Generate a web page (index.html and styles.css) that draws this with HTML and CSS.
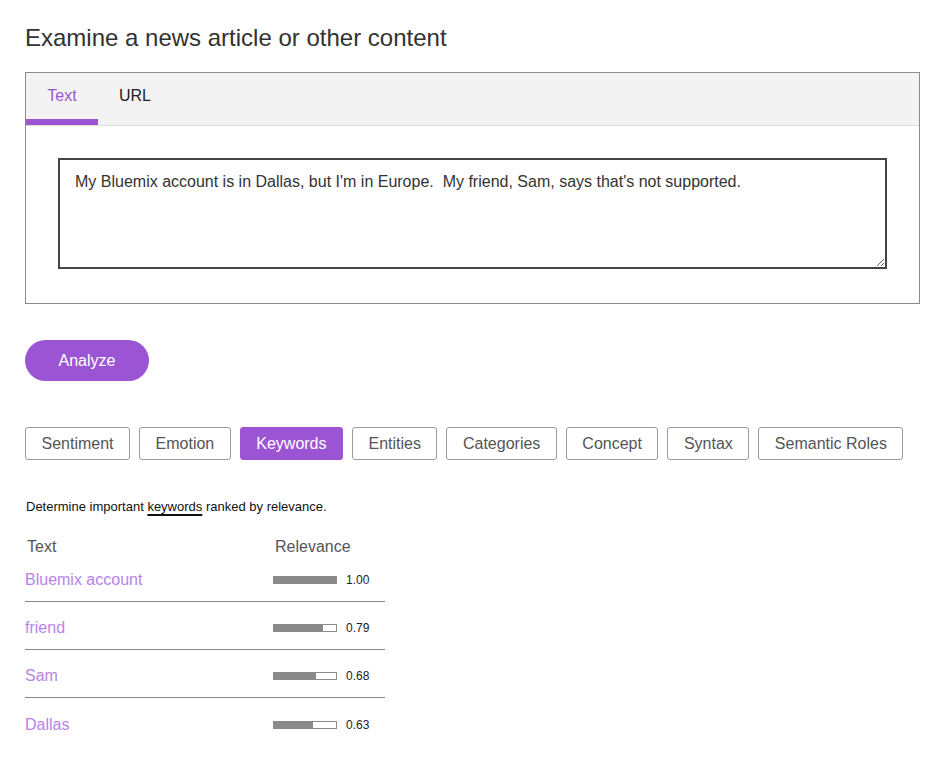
FILE: index.html
```html
<!DOCTYPE html>
<html>
<head>
<meta charset="utf-8">
<link rel="stylesheet" href="styles.css">
</head>
<body>
<main class="page">
  <h1 class="title">Examine a news article or other content</h1>
  <section class="panel">
    <div class="panel-tabs">
      <div class="panel-tab active">Text</div>
      <div class="panel-tab">URL</div>
    </div>
    <div class="panel-body">
      <textarea class="input" spellcheck="false">My Bluemix account is in Dallas, but I'm in Europe.  My friend, Sam, says that's not supported.</textarea>
    </div>
  </section>
  <button class="analyze">Analyze</button>
  <nav class="features">
    <button class="feature">Sentiment</button>
    <button class="feature">Emotion</button>
    <button class="feature selected">Keywords</button>
    <button class="feature">Entities</button>
    <button class="feature">Categories</button>
    <button class="feature">Concept</button>
    <button class="feature">Syntax</button>
    <button class="feature">Semantic Roles</button>
  </nav>
  <p class="desc">Determine important <span class="term">keywords</span> ranked by relevance.</p>
  <div class="results">
    <div class="row head">
      <div class="c-text">Text</div>
      <div class="c-rel">Relevance</div>
    </div>
    <div class="row item">
      <div class="c-text link">Bluemix account</div>
      <div class="c-rel"><span class="bar"><span class="fill" style="width:100%"></span></span><span class="val">1.00</span></div>
    </div>
    <div class="row item">
      <div class="c-text link">friend</div>
      <div class="c-rel"><span class="bar"><span class="fill" style="width:79%"></span></span><span class="val">0.79</span></div>
    </div>
    <div class="row item">
      <div class="c-text link">Sam</div>
      <div class="c-rel"><span class="bar"><span class="fill" style="width:68%"></span></span><span class="val">0.68</span></div>
    </div>
    <div class="row item last">
      <div class="c-text link">Dallas</div>
      <div class="c-rel"><span class="bar"><span class="fill" style="width:63%"></span></span><span class="val">0.63</span></div>
    </div>
  </div>
</main>
</body>
</html>
```

FILE: styles.css
```css
* { box-sizing: border-box; }
html, body { margin: 0; padding: 0; background: #fff; }
body { font-family: "Liberation Sans", Arial, sans-serif; color: #333; }
.page { padding: 24px 28px 0 25px; }

.title {
  margin: 0;
  font-size: 24px;
  font-weight: normal;
  line-height: 28px;
  color: #323232;
}

.panel {
  margin-top: 20px;
  border: 1px solid #8c8c8c;
  width: 895px;
}
.panel-tabs {
  display: flex;
  background: #f3f3f3;
  border-bottom: 1px solid #dcdcdc;
  height: 53px;
}
.panel-tab {
  padding: 0 21px;
  min-width: 72px;
  text-align: center;
  font-size: 16px;
  line-height: 46px;
  color: #222;
  border-bottom: 6px solid transparent;
}
.panel-tab.active {
  color: #9b55d4;
  border-bottom-color: #9b55d4;
}
.panel-body { padding: 32px 32px 34px 32px; }
.input {
  display: block;
  width: 829px;
  height: 111px;
  border: 2px solid #444;
  padding: 13px 15px;
  font-family: "Liberation Sans", Arial, sans-serif;
  font-size: 16px;
  line-height: 18px;
  color: #333;
  resize: vertical;
  outline: none;
}

.analyze {
  display: block;
  margin-top: 36px;
  width: 124px;
  height: 41px;
  border: 0;
  border-radius: 21px;
  background: #9b55d4;
  color: #fff;
  font-family: "Liberation Sans", Arial, sans-serif;
  font-size: 16px;
}

.features {
  display: flex;
  gap: 9px;
  margin-top: 46px;
}
.feature {
  height: 33px;
  padding: 0 15.5px;
  border: 1px solid #9a9a9a;
  border-radius: 3px;
  background: #fff;
  color: #555;
  font-family: "Liberation Sans", Arial, sans-serif;
  font-size: 16px;
}
.feature.selected {
  background: #9b55d4;
  border-color: #9b55d4;
  color: #fff;
}

.desc {
  margin: 39px 0 0 1px;
  font-size: 13px;
  line-height: 16px;
  color: #111;
}
.term {
  text-decoration: underline;
  text-decoration-thickness: 2px;
  text-underline-offset: 3px;
}

.results { width: 360px; margin-top: 25px; }
.row {
  display: grid;
  grid-template-columns: 248px 1fr;
  align-items: center;
}
.row.head { height: 14px; line-height: 14px; font-size: 16px; color: #555; }
.row.head .c-text { padding-left: 2px; }
.row.head .c-rel { padding-left: 2px; }
.row.item {
  height: 48px;
  padding-top: 5px;
  border-bottom: 1px solid #8a8486;
  font-size: 16px;
}
.row.item.last { border-bottom: 0; }
.link { color: #b883ea; }
.c-rel { display: flex; align-items: center; }
.bar {
  display: inline-block;
  width: 64px;
  height: 8px;
  border: 1px solid #8a8a8a;
  background: #fff;
}
.fill { display: block; height: 100%; background: #8a8a8a; }
.val { margin-left: 9px; font-size: 12px; color: #222; }
```
